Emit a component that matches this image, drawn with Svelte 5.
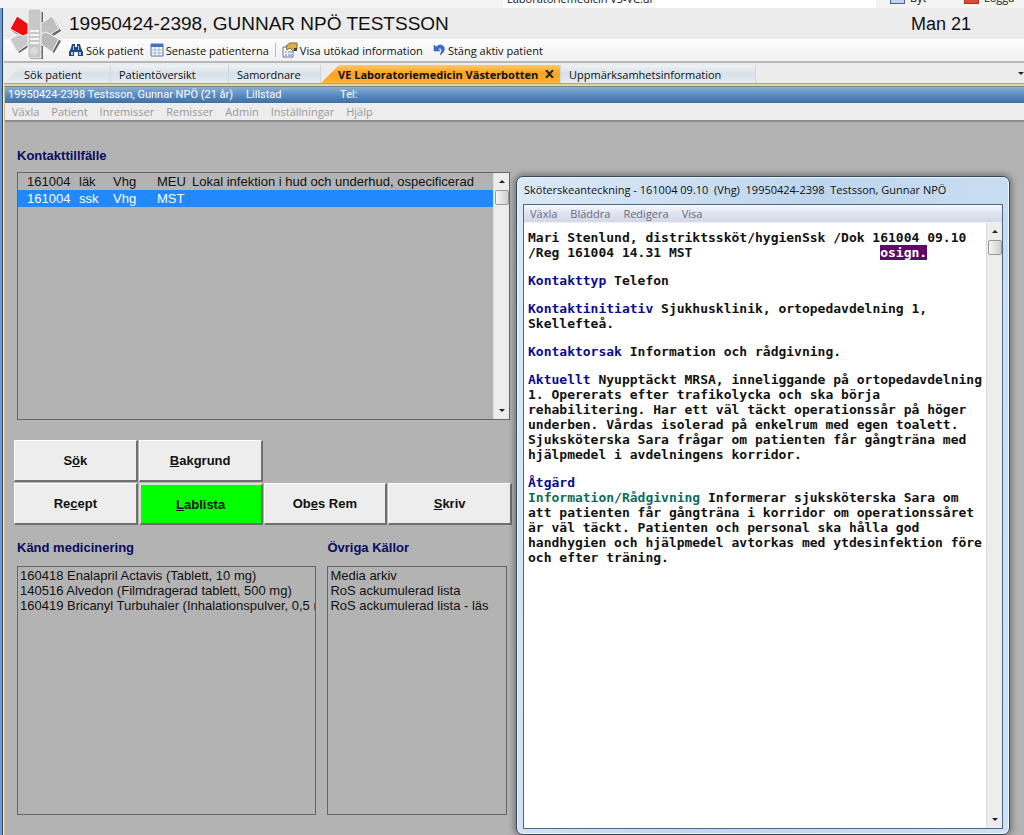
<script>
    // --- Patient ---
    const patient = {
        title: '19950424-2398, GUNNAR NPÖ TESTSSON',
        sexAge: 'Man 21',
        name: '19950424-2398 Testsson, Gunnar NPÖ (21 år)',
        town: 'Lillstad'
    };

    // --- Navigation ---
    const tabs = [
        { label: 'Sök patient', width: 107 },
        { label: 'Patientöversikt', width: 118 },
        { label: 'Samordnare', width: 92 },
        { label: 'VE Laboratoriemedicin Västerbotten', width: 240, closable: true },
        { label: 'Uppmärksamhetsinformation', width: 195 }
    ];
    const menu = ['Växla', 'Patient', 'Inremisser', 'Remisser', 'Admin', 'Inställningar', 'Hjälp'];
    const noteMenu = ['Växla', 'Bläddra', 'Redigera', 'Visa'];

    // --- Lists ---
    const contacts = [
        { date: '161004', role: 'läk', unit: 'Vhg', sign: 'MEU', text: 'Lokal infektion i hud och underhud, ospecificerad' },
        { date: '161004', role: 'ssk', unit: 'Vhg', sign: 'MST', text: '' }
    ];
    const medicines = [
        '160418 Enalapril Actavis (Tablett, 10 mg)',
        '140516 Alvedon (Filmdragerad tablett, 500 mg)',
        '160419 Bricanyl Turbuhaler (Inhalationspulver, 0,5 mg'
    ];
    const sources = ['Media arkiv', 'RoS ackumulerad lista', 'RoS ackumulerad lista - läs'];

    // Button labels are split around the underlined access key
    const actions = [
        { before: 'S', key: 'ö', after: 'k' },
        { before: '', key: 'B', after: 'akgrund' },
        { before: 'Re', key: 'c', after: 'ept' },
        { before: '', key: 'L', after: 'ablista', green: true },
        { before: 'Ob', key: 'e', after: 's Rem' },
        { before: '', key: 'S', after: 'kriv' }
    ];

    let activeTab = $state(3);
    let selected = $state(1);
</script>

{#snippet scrollbar()}
    <div class="scrollbar">
        <button aria-label="Rulla upp"><i class="up"></i></button>
        <span class="thumb"></span>
        <button class="last" aria-label="Rulla ned"><i class="down"></i></button>
    </div>
{/snippet}

<div class="app">
    <div class="strip">
        <span class="strip-field">Laboratoriemedicin VS-VC.ur</span>
        <span class="strip-item"><i class="disk"></i><span>Byt</span></span>
        <span class="strip-item"><i class="exit"></i><span>Logga</span></span>
    </div>

    <div class="frame">
        <header>
            <svg class="logo" viewBox="0 0 52 53">
                <g class="shade">
                    <path d="M20 4h13v47H20z" />
                    <path d="M33 18l11-7 7 12-11 7zM33 38l11 7 7-12-11-7zM20 38L9 45 2 33l11-7zM20 18L9 11 2 23l11 7z" />
                </g>
                <g stroke="#f7f7f7">
                    <path d="M29 17l13-9 7 13-13 8-7-2z" fill="#c0c0c0" />
                    <path d="M29 35l13 9 7-13-13-7-7 3z" fill="#bababa" />
                    <path d="M20 35L7 44 0 31l13-7 7 3z" fill="#c9c9c9" />
                    <path d="M20 17L7 8 0 21l13 7 7-3z" fill="#f00d12" />
                    <path d="M18 1h13v49H18z" fill="#c8c8c8" />
                </g>
                <path d="M20 23h9M20 27h9M20 31h9M20 35h9" stroke="#f5f5f5" stroke-width="2" />
                <circle cx="24" cy="43" r="4" fill="#dadada" />
            </svg>
            <div class="header-main">
                <div class="title-row">
                    <h1>{patient.title}</h1>
                    <span class="sex-age">{patient.sexAge}</span>
                </div>
                <div class="toolbar">
                    <button>
                        <svg width="16" height="16" viewBox="0 0 16 16">
                            <path d="M4 2h3v3h2V2h3l1 4 2 4v4h-5v-4H6v4H1v-4l2-4z" fill="#27467f" />
                            <path d="M3 10h2v3H3zM11 10h2v3h-2zM5 4h1v4H5zM10 4h1v4h-1z" fill="#a9c4ee" />
                        </svg>
                        Sök patient
                    </button>
                    <button>
                        <svg width="14" height="14" viewBox="0 0 14 14">
                            <path d="M1 1h12v12H1z" fill="#fff" stroke="#4b6ea8" />
                            <path d="M1 1h12v3H1z" fill="#4773bd" />
                            <path d="M1 7h12M1 10h12M5 4v9M9 4v9" stroke="#9bb5d8" />
                        </svg>
                        Senaste patienterna
                    </button>
                    <span class="divider"></span>
                    <button>
                        <svg width="16" height="16" viewBox="0 0 16 16">
                            <path d="M1 5h10v10H1z" fill="#fff" stroke="#5876a3" />
                            <path d="M3 10h2M3 13h2M6 10h4M6 13h4" stroke="#4c74b3" />
                            <path d="M4 4l4-3h7v6l-4 2-3-3-3 2z" fill="#dbb04b" stroke="#85652a" />
                            <path d="M12 6h3v3h-3z" fill="#345" />
                        </svg>
                        Visa utökad information
                    </button>
                    <button class="undo">
                        <svg width="13" height="14" viewBox="0 0 13 14">
                            <path d="M1 2v6h6L5 6c3-2 5 1 2 6 6-3 6-11-1-10L3 4z" fill="#3a6bd0" stroke="#2450a8" stroke-width=".5" />
                        </svg>
                        Stäng aktiv patient
                    </button>
                </div>
            </div>
        </header>

        <nav class="tabs">
            {#each tabs as tab, i}
                <button class="tab" class:active={i === activeTab} style:width="{tab.width}px" onclick={() => (activeTab = i)}>
                    {tab.label}
                    {#if tab.closable}
                        <svg width="9" height="8" viewBox="0 0 9 8"><path d="M1 0l7 8M8 0L1 8" stroke="#222" stroke-width="2" /></svg>
                    {/if}
                </button>
            {/each}
            <i class="down more"></i>
        </nav>

        <div class="module">
            <div class="patient-bar">
                <span>{patient.name}</span>
                <span class="town">{patient.town}</span>
                <span>Tel:</span>
            </div>
            <div class="menu">
                {#each menu as item}
                    <button>{item}</button>
                {/each}
            </div>

            <main>
                <div class="left">
                    <section class="contact-section">
                        <h2>Kontakttillfälle</h2>
                        <div class="box contacts">
                            <table>
                                <tbody>
                                    {#each contacts as row, i}
                                        <tr class:selected={i === selected} onclick={() => (selected = i)}>
                                            <td class="date">{row.date}</td>
                                            <td class="role">{row.role}</td>
                                            <td class="unit">{row.unit}</td>
                                            <td class="sign">{row.sign}</td>
                                            <td>{row.text}</td>
                                        </tr>
                                    {/each}
                                </tbody>
                            </table>
                            {@render scrollbar()}
                        </div>
                    </section>

                    <div class="actions">
                        {#each actions as a}
                            <button class:green={a.green}>{a.before}<u>{a.key}</u>{a.after}</button>
                        {/each}
                    </div>

                    <div class="lists">
                        <section class="medicines">
                            <h2>Känd medicinering</h2>
                            <ul class="box">
                                {#each medicines as m}
                                    <li>{m}</li>
                                {/each}
                            </ul>
                        </section>
                        <section class="sources">
                            <h2>Övriga Källor</h2>
                            <ul class="box">
                                {#each sources as s}
                                    <li>{s}</li>
                                {/each}
                            </ul>
                        </section>
                    </div>
                </div>

                <article class="note">
                    <h3>Sköterskeanteckning - 161004 09.10 &nbsp;(Vhg) &nbsp;19950424-2398 &nbsp;Testsson, Gunnar NPÖ</h3>
                    <div class="note-inner">
                        <div class="note-menu">
                            {#each noteMenu as item}
                                <button>{item}</button>
                            {/each}
                        </div>
                        <div class="note-body">
                            <div class="note-text">
                                <p>Mari Stenlund, distriktssköt/hygienSsk /Dok 161004 09.10<br />/Reg 161004 14.31 MST{' '.repeat(24)}<mark>osign.</mark></p>
                                <p><b>Kontakttyp</b> Telefon</p>
                                <p><b>Kontaktinitiativ</b> Sjukhusklinik, ortopedavdelning 1,<br />Skellefteå.</p>
                                <p><b>Kontaktorsak</b> Information och rådgivning.</p>
                                <p><b>Aktuellt</b> Nyupptäckt MRSA, inneliggande på ortopedavdelning<br />1. Opererats efter trafikolycka och ska börja<br />rehabilitering. Har ett väl täckt operationssår på höger<br />underben. Vårdas isolerad på enkelrum med egen toalett.<br />Sjuksköterska Sara frågar om patienten får gångträna med<br />hjälpmedel i avdelningens korridor.</p>
                                <p><b>Åtgärd</b><br /><b class="sub">Information/Rådgivning</b> Informerar sjuksköterska Sara om<br />att patienten får gångträna i korridor om operationssåret<br />är väl täckt. Patienten och personal ska hålla god<br />handhygien och hjälpmedel avtorkas med ytdesinfektion före<br />och efter träning.</p>
                            </div>
                            {@render scrollbar()}
                        </div>
                    </div>
                </article>
            </main>
        </div>
    </div>
</div>

<style>
    :global(body) {
        margin: 0;
        background: #ececec;
    }

    .app {
        display: flex;
        flex-direction: column;
        min-height: 100vh;
        font-family: 'Open Sans', 'Noto Sans', sans-serif;
        font-size: 11px;
        color: #111;
    }

    button {
        font: inherit;
        color: inherit;
        background: none;
        border: none;
        padding: 0;
        margin: 0;
        white-space: nowrap;
    }

    h1, h2, h3, p, ul {
        margin: 0;
        padding: 0;
        font-weight: 400;
    }

    /* --- Top strip, the lower edge of the host toolbar --- */
    .strip {
        display: flex;
        align-items: flex-end;
        height: 8px;
        overflow: hidden;
        line-height: 14px;
        background: #f3f3f3;
    }

    .strip-field {
        flex: 0 0 369px;
        margin-left: auto;
        padding: 0 0 2px 4px;
        background: #fff;
    }

    .strip-item {
        display: flex;
        align-items: flex-end;
        gap: 5px;
        flex: 0 0 60px;
        padding-left: 14px;
    }

    .strip-item span {
        padding-bottom: 3px;
    }

    .strip-item i {
        width: 13px;
        height: 10px;
        margin-bottom: 4px;
        border: 1px solid #4a6595;
        background: #c3d2ea;
    }

    .strip-item .exit {
        border-color: #b03020;
        background: #e04a35;
    }

    /* --- Frame --- */
    .frame {
        flex: 1;
        display: flex;
        flex-direction: column;
        border-left: 2px solid #6f9bd3;
        box-shadow: inset 1px 0 #2d4566;
        padding-left: 2px;
    }

    header {
        display: flex;
        padding-left: 6px;
        background: linear-gradient(#ececec 31px, #fdfdfd 31px, #f1f1f1 100%);
        border-bottom: 2px solid #b9b9b9;
    }

    .logo {
        width: 52px;
        height: 53px;
        margin-right: 6px;
    }

    .shade {
        fill: #666;
    }

    .header-main {
        flex: 1;
    }

    .title-row {
        display: flex;
        justify-content: space-between;
        height: 31px;
        line-height: 32px;
        padding: 0 53px 0 1px;
        font-family: 'Liberation Sans', Arial, sans-serif;
    }

    h1 {
        font-size: 19px;
    }

    .sex-age {
        font-size: 18px;
    }

    .toolbar {
        display: flex;
        align-items: center;
        gap: 6px;
        height: 22px;
    }

    .toolbar button {
        display: flex;
        align-items: center;
        gap: 2px;
    }

    .toolbar .undo {
        padding-left: 4px;
    }

    .divider {
        width: 1px;
        height: 14px;
        background: #bbb;
    }

    /* --- Tabs --- */
    .tabs {
        display: flex;
        align-items: flex-end;
        height: 20px;
        background: #ececec;
        border-bottom: 1px solid #a9a98c;
    }

    .tab {
        height: 18px;
        padding: 0 0 0 8px;
        text-align: left;
        background: linear-gradient(#eef2f5, #d7e1e9 50%, #e6edf2);
        border-right: 1px solid #d0d7dc;
    }

    .tab:first-child {
        padding-left: 20px;
        clip-path: polygon(18px 0, 100% 0, 100% 100%, 0 100%);
    }

    .tab.active {
        display: flex;
        align-items: center;
        justify-content: space-between;
        padding: 0 6px 0 17px;
        font-weight: 700;
        background: linear-gradient(#ffc868, #f9a21b 50%, #fdb43c);
        clip-path: polygon(18px 0, 100% 0, 100% 100%, 0 100%);
    }

    .up, .down {
        display: block;
        width: 0;
        border: 3px solid transparent;
    }

    .up {
        border-top: none;
        border-bottom-color: #222;
    }

    .down {
        border-bottom: none;
        border-top-color: #222;
    }

    .more {
        align-self: center;
        margin-left: auto;
    }

    /* --- Module --- */
    .module {
        flex: 1;
        display: flex;
        flex-direction: column;
        border-top: 2px solid #d9d7a0;
        border-left: 1px solid #dcbc80;
        background: #b3b3b3;
    }

    .patient-bar {
        display: flex;
        gap: 13px;
        height: 17px;
        line-height: 17px;
        padding-left: 3px;
        font-family: Roboto, sans-serif;
        color: #fff;
        background: linear-gradient(#7b8794 1px, #8aaed2 1px, #5587c0 60%, #42709e);
    }

    .town {
        width: 81px;
    }

    .menu {
        display: flex;
        gap: 12px;
        height: 17px;
        padding-left: 7px;
        color: #999;
        background: #ededed;
        border-bottom: 2px solid #8c8c8c;
    }

    main {
        flex: 1;
        display: flex;
        padding: 0 14px 0 9px;
    }

    .left {
        flex: 1;
        min-width: 0;
        padding: 26px 4px 20px 0;
        font-family: 'Liberation Sans', Arial, sans-serif;
        font-size: 13px;
    }

    h2 {
        height: 15px;
        line-height: 15px;
        font-size: 13px;
        font-weight: 700;
        color: #0a0a62;
    }

    .box {
        border: 1px solid #666;
        background: #b3b3b3;
    }

    .contact-section {
        margin: 0 2px 0 3px;
    }

    .contacts {
        display: flex;
        height: 246px;
        margin-top: 9px;
    }

    table {
        flex: 1;
        align-self: flex-start;
        border-collapse: collapse;
    }

    td {
        height: 17px;
        padding: 0;
        white-space: nowrap;
    }

    .date {
        width: 52px;
        padding-left: 9px;
    }

    .role {
        width: 34px;
    }

    .unit {
        width: 44px;
    }

    .sign {
        width: 35px;
    }

    .selected {
        color: #fff;
        background: #2288ff;
    }

    .scrollbar {
        display: flex;
        flex-direction: column;
        align-items: center;
        flex: 0 0 15px;
        background: #ededed;
        border-left: 1px solid #dcdcdc;
    }

    .scrollbar button {
        display: flex;
        align-items: center;
        justify-content: center;
        width: 15px;
        height: 17px;
    }

    .scrollbar .last {
        margin-top: auto;
    }

    .thumb {
        width: 12px;
        height: 13px;
        border: 1px solid #999;
        border-radius: 2px;
        background: linear-gradient(90deg, #f6f6f6, #cfcfcf);
    }

    .actions {
        display: grid;
        grid-template-columns: repeat(4, 1fr);
        gap: 1px;
        margin-top: 20px;
    }

    .actions button {
        height: 42px;
        font-weight: 700;
        background: #ededed;
        border: 1px solid #fff;
        border-right: 2px solid #707070;
        border-bottom: 2px solid #707070;
    }

    /* The first row holds two buttons only */
    .actions button:nth-child(3) {
        grid-column: 1;
    }

    .actions .green {
        background: #00ff00;
        border-left: 2px solid #ddd;
        border-top: 2px solid #ddd;
    }

    .lists {
        display: flex;
        gap: 11px;
        margin: 15px 5px 0 3px;
    }

    .medicines {
        flex: 5;
        min-width: 0;
    }

    .sources {
        flex: 3;
        min-width: 0;
    }

    .lists .box {
        height: 246px;
        margin-top: 11px;
        padding: 1px 0 0 2px;
        list-style: none;
        overflow: hidden;
        white-space: nowrap;
        line-height: 15px;
    }

    /* --- Note window --- */
    .note {
        flex: 0 0 494px;
        box-sizing: border-box;
        display: flex;
        flex-direction: column;
        margin-top: 54px;
        padding: 0 6px 5px;
        border: 1px solid #34495e;
        border-radius: 7px;
        background: linear-gradient(100deg, #dce9f6, #bed6ee 50%, #cfe1f4);
        box-shadow: inset 0 0 0 1px #eaf4fd, 0 0 6px 2px rgba(0, 0, 0, .35);
    }

    h3 {
        height: 27px;
        line-height: 26px;
        padding-left: 1px;
        font-size: 11px;
        white-space: nowrap;
    }

    .note-inner {
        flex: 1;
        display: flex;
        flex-direction: column;
        border: 1px solid #4c6787;
        background: #fff;
    }

    .note-menu {
        display: flex;
        gap: 13px;
        height: 17px;
        padding-left: 6px;
        color: #666b78;
        background: linear-gradient(#f8f9fd, #dfe3f1 50%, #d3d8ea);
        border-bottom: 1px solid #f0f0f0;
    }

    .note-body {
        flex: 1;
        display: flex;
    }

    .note-text {
        flex: 1;
        padding: 7px 0 0 4px;
        font-family: 'DejaVu Sans Mono', monospace;
        font-size: 13px;
        line-height: 15px;
    }

    .note-text p {
        margin-bottom: 13px;
        font-weight: 700;
        white-space: pre;
    }

    b {
        color: #0a0a90;
    }

    .sub {
        color: #0c6b60;
    }

    mark {
        color: #fff;
        background: #5c0a66;
    }
</style>
